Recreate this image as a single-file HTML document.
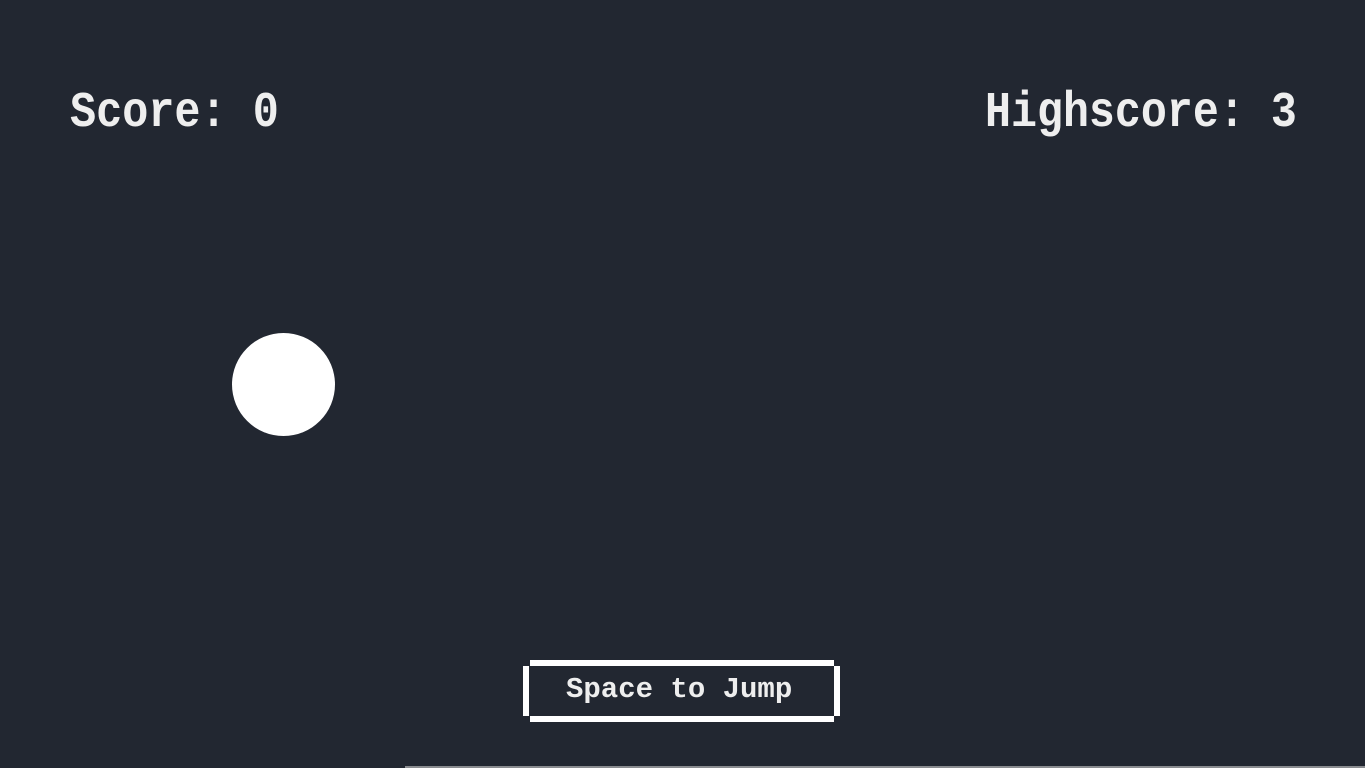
<!DOCTYPE html>
<html><head><meta charset="utf-8"><style>
html,body{margin:0;padding:0;width:1365px;height:768px;overflow:hidden;background:#222731;}
.t{position:absolute;color:#eeeeee;font-family:"Liberation Mono","DejaVu Sans Mono",monospace;font-weight:bold;white-space:nowrap;line-height:1;transform-origin:0 0;}
#s{left:70px;top:89px;font-size:50px;transform:scale(0.87,1);}
#h{left:985px;top:89px;font-size:50px;transform:scale(0.866,1);}
#ball{position:absolute;left:232px;top:333px;width:103px;height:103px;background:#fff;border-radius:50%;}
.b{position:absolute;background:#fff;}
#j{left:566px;top:675px;font-size:29px;transform:scale(1,1);}
</style></head><body>
<div class="t" id="s">Score: 0</div>
<div class="t" id="h">Highscore: 3</div>
<div id="ball"></div>
<div class="b" style="left:530px;top:660px;width:304px;height:6px"></div>
<div class="b" style="left:530px;top:716px;width:304px;height:6px"></div>
<div class="b" style="left:523px;top:666px;width:6px;height:50px"></div>
<div class="b" style="left:834px;top:666px;width:6px;height:50px"></div>
<div class="t" id="j">Space to Jump</div>
<div style="position:absolute;left:405px;top:766px;width:960px;height:2px;background:#8a8c90"></div>
</body></html>
